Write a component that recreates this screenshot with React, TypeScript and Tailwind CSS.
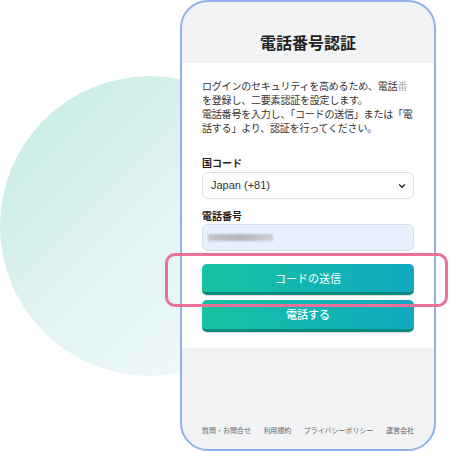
import React from 'react';
import { ChevronDown } from 'lucide-react';

const jp = "font-['Noto_Sans_CJK_JP','Noto_Sans',sans-serif]";

export default function App() {
  return (
    <div className={`relative w-[452px] h-[452px] overflow-hidden bg-white ${jp}`}>
      {/* decorative circle behind the phone */}
      <div className="absolute left-0 top-[76px] w-[300px] h-[300px] rounded-full bg-gradient-to-br from-[#c4ebe3] via-[#e2f4f3] to-[#f7fafd]" />

      <div className="relative ml-[180px] w-[256px] h-[451px] border-2 border-[#8db3ea] rounded-[28px] overflow-hidden bg-[#f2f3f5] flex flex-col">
        <div className="h-[61px] pt-[28px] flex justify-center">
          <h1 className="text-[16px] leading-[24px] font-bold text-[#222]">電話番号認証</h1>
        </div>

        <div className="bg-white px-[20px] pt-[16px] pb-[16px] flex flex-col">
          <p className="text-[10px] leading-[14px] text-[#333] whitespace-nowrap tracking-[-0.2px]">
            ログインのセキュリティを高めるため、電話<span className="opacity-40 blur-[0.6px]">番</span>
            <br />
            を登録し、二要素認証を設定します。
            <br />
            電話番号を入力し、「コードの送信」または「電
            <br />
            話する」より、認証を行ってください。
          </p>

          <label className="mt-[21px] mb-[2px] text-[10px] leading-[14px] font-bold text-[#222]">国コード</label>
          <div className="h-[27px] rounded-[6px] border border-[#dcdfe6] bg-white flex items-center justify-between pl-[8px] pr-[6px]">
            <span className="text-[11px] text-[#333] font-['Liberation_Sans',sans-serif]">Japan (+81)</span>
            <ChevronDown size={10} strokeWidth={3} className="text-[#222]" />
          </div>

          <label className="mt-[10px] mb-[1px] text-[10px] leading-[14px] font-bold text-[#222]">電話番号</label>
          <div className="h-[27px] rounded-[6px] border border-[#d6dbe8] bg-[#e8f0fe] flex items-center pl-[5px]">
            <div className="w-[65px] h-[7px] bg-gradient-to-r from-[#c6c6cc] via-[#b4b4ba] to-[#cfcfd4] blur-[1.2px]" />
          </div>

          <button className="mt-[13px] h-[31px] rounded-[5px] border-b-[3px] border-[#0c8a7c] bg-gradient-to-r from-[#17c3a1] to-[#12a8bf] text-white text-[11px] shadow-[0_1px_1px_rgba(0,0,0,0.15)]">
            コードの送信
          </button>
          <button className="mt-[5px] h-[32px] rounded-[5px] border-b-[3px] border-[#0c8a7c] bg-gradient-to-r from-[#17c3a1] to-[#12a8bf] text-white text-[11px] font-medium shadow-[0_1px_1px_rgba(0,0,0,0.15)]">
            電話する
          </button>
        </div>

        <div className="flex-1 flex items-end justify-between px-[20px] pb-[14px] text-[7px] leading-[10px] text-[#666]">
          <span>質問・お問合せ</span>
          <span>利用規約</span>
          <span>プライバシーポリシー</span>
          <span>運営会社</span>
        </div>
      </div>

      {/* highlight frame over the send button */}
      <div className="absolute left-[165px] top-[253px] w-[283px] h-[54px] rounded-[10px] border-[3px] border-[#e8709a]" />
    </div>
  );
}
